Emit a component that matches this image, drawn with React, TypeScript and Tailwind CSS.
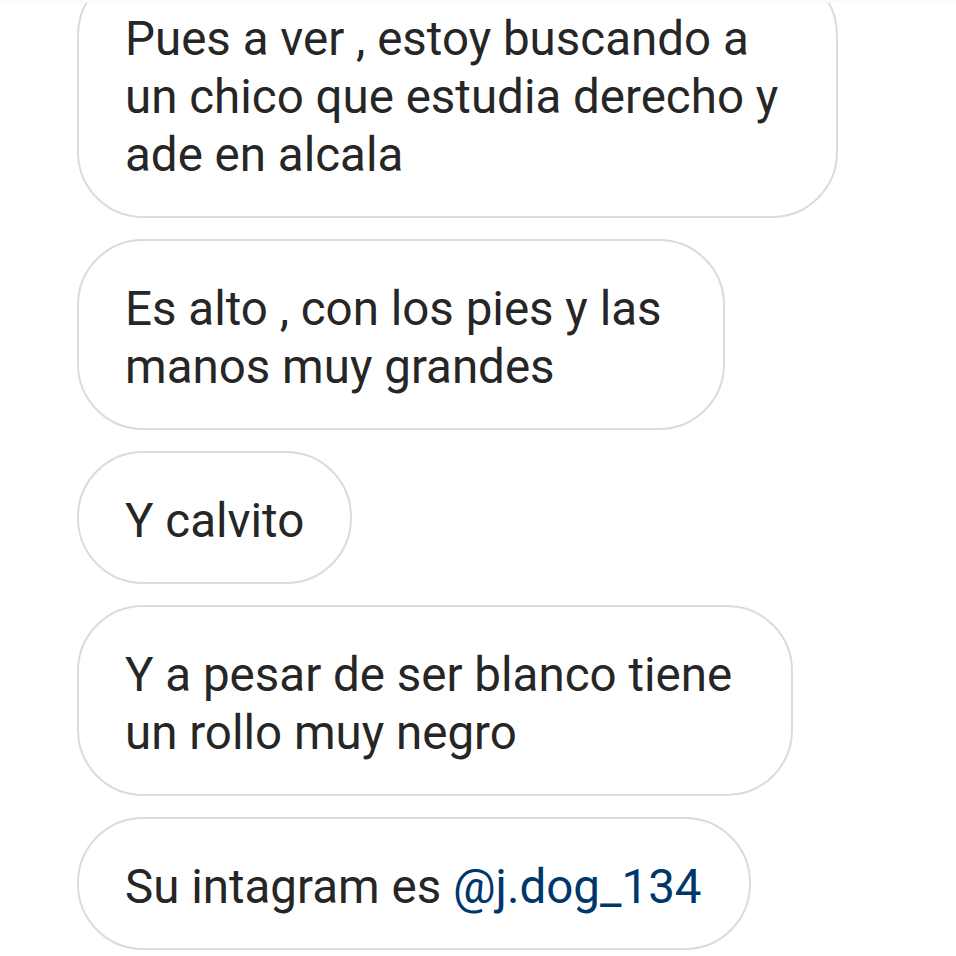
import React from "react";

const Bubble = ({ children, w }: { children: React.ReactNode; w: string }) => (
  <div
    className={`${w} whitespace-nowrap rounded-[66px] border-2 border-[#dbdbdb] bg-white pb-[32px] pl-[46px] pr-[40px] pt-[39px] text-[47.5px] leading-[58px] text-[#262626]`}
  >
    {children}
  </div>
);

export default function App() {
  return (
    <div
      className="relative h-[956px] w-[956px] overflow-hidden bg-white"
      style={{ fontFamily: "Roboto, 'Noto Sans', sans-serif" }}
    >
      <div className="absolute left-0 right-0 top-0 z-10 h-[3px] bg-[#fafafa]" />
      <div className="-mt-[31px] flex flex-col gap-[21px] pl-[77px]">
        <Bubble w="w-[761px]">
          Pues a ver , estoy buscando a
          <br />
          un chico que estudia derecho y
          <br />
          ade en alcala
        </Bubble>
        <Bubble w="w-[648px]">
          Es alto , con los pies y las
          <br />
          manos muy grandes
        </Bubble>
        <Bubble w="w-[275px]">Y calvito</Bubble>
        <Bubble w="w-[716px]">
          Y a pesar de ser blanco tiene
          <br />
          un rollo muy negro
        </Bubble>
        <Bubble w="w-[674px]">
          Su intagram es <span className="text-[#00376b]">@j.dog_134</span>
        </Bubble>
      </div>
    </div>
  );
}
